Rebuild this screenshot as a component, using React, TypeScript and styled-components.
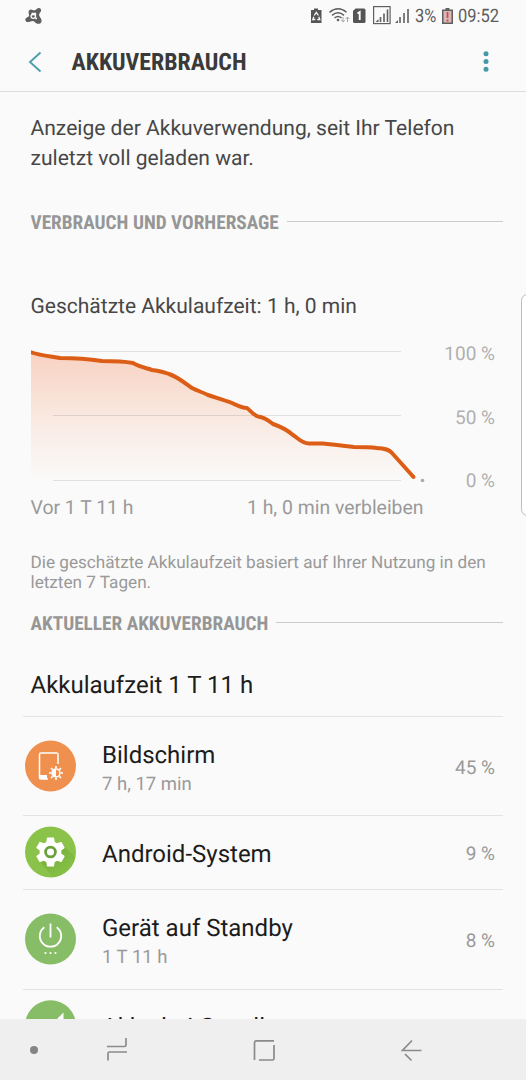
import React from 'react';
import styled, { createGlobalStyle } from 'styled-components';

const Global = createGlobalStyle`
  * { box-sizing: border-box; }
  body { margin: 0; background: #fafafa; font-family: Roboto, "Liberation Sans", sans-serif; overflow: hidden; text-rendering: geometricPrecision; }
  svg { display: block; flex: none; }
`;
const Screen = styled.div`
  width: 526px; height: 1080px; display: flex; flex-direction: column;
  background: #fafafa; color: #474747; overflow: hidden; position: relative; white-space: nowrap;
`;
const StatusBar = styled.div`
  height: 32px; flex: none; display: flex; align-items: center; padding: 0 27px 0 25px; color: #5c5c5c;
`;
const StatusIcons = styled.div`
  margin-left: auto; display: flex; align-items: center;
`;
const StatusText = styled.span<{ $w: number }>`
  width: ${p => p.$w}px; font-size: 18.5px; line-height: 32px; display: flex;
  span { transform-origin: 0 50%; transform: scaleX(0.89); }
`;
const Header = styled.header`
  height: 60px; flex: none; display: flex; align-items: center; padding: 0 37px 0 28px;
  border-bottom: 1px solid #dedede;
`;
const Title = styled.h1`
  margin: 0 auto 0 29.5px; padding-top: 1px; font-size: 23.8px; line-height: 30px; font-weight: 700; color: #3a3a3a;
  font-family: "Roboto Condensed", Roboto, sans-serif; font-stretch: 75%;
`;
const Content = styled.main`
  flex: 1; min-height: 0; overflow: hidden; padding: 0 23px 0 30.5px;
`;
const Intro = styled.p`
  margin: 22px 0 0; font-size: 21.05px; line-height: 30px;
`;
const Section = styled.h2<{ $top: number }>`
  margin: ${p => p.$top}px 0 0; display: flex; align-items: center; gap: 8px; height: 24px;
  font-size: 19.3px; line-height: 24px; color: #969696; font-weight: 700;
  font-family: "Roboto Condensed", Roboto, sans-serif; font-stretch: 75%;
  &::after { content: ''; flex: 1; height: 1px; background: #cbcbcb; margin-bottom: 4px; }
`;
const Estimate = styled.p`
  margin: 59px 0 0; font-size: 21px; line-height: 26px;
`;
const ChartRow = styled.div`
  display: flex; justify-content: space-between; margin-top: 22px; padding-right: 8px; height: 151px;
`;
const Scale = styled.div`
  display: flex; flex-direction: column; justify-content: space-between; height: 151px;
  text-align: right; font-size: 19px; line-height: 24px; color: #b0b0b0;
`;
const Times = styled.div`
  display: flex; justify-content: space-between; width: 393px; margin-top: 3px;
  font-size: 19.4px; line-height: 24px; color: #999;
`;
const Note = styled.p`
  margin: 33px 0 0; font-size: 17.15px; line-height: 20px; color: #999;
`;
const Runtime = styled.p`
  margin: 34px 0 0; font-size: 24px; line-height: 30px; color: #1c1c1c; height: 46px;
`;
const List = styled.div`
  margin-left: -7.5px;
`;
const Row = styled.div<{ $h: number }>`
  height: ${p => p.$h}px; border-top: 1px solid #e3e3e3; display: flex; align-items: center; padding: 0 8px 0 2px;
  > svg { margin-bottom: 1px; }
`;
const Labels = styled.div<{ $double: boolean }>`
  margin: 0 auto 0 26px; padding-top: ${p => (p.$double ? 5 : 3)}px;
`;
const Name = styled.div`
  font-size: 24px; line-height: 30px; color: #1c1c1c;
`;
const Detail = styled.div`
  font-size: 18.5px; line-height: 28px; color: #999;
`;
const Percent = styled.div`
  font-size: 19px; line-height: 24px; color: #999; padding-top: 3px;
`;
const Nav = styled.nav`
  height: 61px; flex: none; background: #efefef; display: flex; align-items: center; padding: 1px 0 0 29px;
`;
const Space = styled.span<{ $w: number }>`
  width: ${p => p.$w}px; flex: none;
`;
const EdgeHandle = styled.div`
  position: absolute; top: 294px; right: -8px; width: 13px; height: 222px;
  border: 1px solid #bdbdbd; border-radius: 7px; background: #fff;
`;

const line = 'M30.5 352 C38 355 48 356 60 358 C78 358 89 359 102 361 C114 361 122 361 133 363 C140 367 146 368 152 370 C159 371 164 372 169 374 C178 377 186 384 192 388 C198 391 202 392 208 395 C217 398 224 400 232 403 C236 405 242 408 247 408 C251 411 252 414 258 416.500 C263 417 268 420 273 424 C282 427 286 429 293 435 C299 439 302 443.500 309 443.500 L323 443.500 C336 445 344 446 354 447 C364 447 369 447 377 448 C384 448.500 389 449 392 453 L413.500 477';

const Chart = () => (
  <svg width="395" height="151" viewBox="31 342 395 151">
    <defs>
      <linearGradient id="fill" x1="0" y1="352" x2="0" y2="480" gradientUnits="userSpaceOnUse">
        <stop offset="0" stopColor="#f8d2c2" />
        <stop offset=".5" stopColor="#f9e8e0" />
        <stop offset="1" stopColor="#fafafa" />
      </linearGradient>
    </defs>
    <path d={line + ' V480 H30.5Z'} fill="url(#fill)" />
    <path d="M53 351.500H401M53 415.500H401M53 480.500H401" stroke="#000" strokeOpacity=".1" />
    <path d={line} fill="none" stroke="#dc5d15" strokeWidth="4" strokeLinejoin="round" />
    <circle cx="413.500" cy="477" r="2" fill="#dc5d15" />
    <circle cx="422.500" cy="480.500" r="1.800" fill="#aaa" />
  </svg>
);

const ScreenIcon = () => (
  <svg width="51" height="52" viewBox="0 0 51 52">
    <circle cx="25.500" cy="26" r="25.500" fill="#ef904e" />
    <g fill="none" stroke="#fff" strokeWidth="1.500">
      <path d="M33 24V14.500a1.500 1.500 0 0 0-1.500-1.500H16a1.500 1.500 0 0 0-1.500 1.500v23A1.500 1.500 0 0 0 16 39h7" />
      <path d="M14.500 37H22" strokeWidth="4" />
      <circle cx="31" cy="33" r="4" />
      <path d="M31 26v2.200M31 37.800V40M24 33h2.200M35.800 33H38M26 28l1.600 1.600M34.400 36.400 36 38M36 28l-1.600 1.600M27.600 36.400 26 38" strokeWidth="1.700" />
    </g>
    <path d="M31 29a4 4 0 0 0 0 8z" fill="#fff" />
  </svg>
);

const GearIcon = () => (
  <svg width="51" height="52" viewBox="0 0 51 52">
    <defs>
      <clipPath id="disc"><circle cx="25.500" cy="26" r="25.500" /></clipPath>
      <linearGradient id="shade" x1="22" y1="30" x2="36" y2="50" gradientUnits="userSpaceOnUse">
        <stop offset="0" stopColor="#6aa535" /><stop offset="1" stopColor="#83bf43" />
      </linearGradient>
    </defs>
    <circle cx="25.500" cy="26" r="25.500" fill="#8bc34a" />
    <path clipPath="url(#disc)" d="M38 19 52 33v19H28L14 34z" fill="url(#shade)" opacity=".6" />
    <g transform="translate(8.100 8.600) scale(1.450)">
      <path fill="#fff" d="M19.430 12.980c.040-.320.070-.640.070-.980s-.030-.660-.070-.980l2.110-1.650c.190-.150.240-.420.120-.640l-2-3.460c-.120-.220-.390-.300-.610-.220l-2.490 1c-.520-.400-1.080-.730-1.690-.980l-.380-2.650C14.460 2.180 14.250 2 14 2h-4c-.250 0-.460.180-.490.420l-.380 2.650c-.610.250-1.170.590-1.690.980l-2.490-1c-.230-.090-.490 0-.610.220l-2 3.460c-.130.220-.070.490.120.640l2.110 1.650c-.040.320-.070.650-.070.980s.030.660.070.980l-2.110 1.650c-.190.150-.240.420-.120.640l2 3.460c.120.220.390.300.610.220l2.490-1c.520.400 1.080.730 1.690.980l.380 2.650c.030.240.240.420.490.420h4c.250 0 .460-.180.490-.420l.380-2.650c.610-.250 1.170-.590 1.690-.980l2.490 1c.230.090.490 0 .610-.220l2-3.460c.120-.220.070-.490-.120-.640l-2.110-1.650z" />
      <circle cx="12" cy="12" r="3.400" fill="#fff" stroke="#69a23a" strokeWidth="1.900" />
    </g>
  </svg>
);

const PowerIcon = () => (
  <svg width="51" height="52" viewBox="0 0 51 52">
    <circle cx="25.500" cy="26" r="25.500" fill="#86bd66" />
    <path d="M25.500 10.500v14M19.300 14.200a10.700 10.700 0 1 0 12.400 0" fill="none" stroke="#fff" strokeWidth="1.800" />
    <g fill="#fff"><circle cx="20.500" cy="40" r="1.100" /><circle cx="25.500" cy="40" r="1.100" /><circle cx="30.500" cy="40" r="1.100" /></g>
  </svg>
);

const SignalIcon = () => (
  <svg width="51" height="52" viewBox="0 0 51 52">
    <circle cx="25.500" cy="26.800" r="25.500" fill="#86bd66" />
    <path d="M38.500 13.500v25h-25z" fill="#fff" />
  </svg>
);

const AvastIcon = () => (
  <svg width="17" height="17" viewBox="0 0 17 17">
    <path d="M6 1.500c1.500 0 2.400 1.200 3.800.8C11.400 1.800 12 0 14 0c1.800 0 2.700 2 1.700 3.700-.9 1.400-1.900 2.300-1.500 3.900.5 2 2.500 3.100 2.400 5.300-.1 2.500-3 3.600-5 2.500-1.600-1-2.200-2.600-4-2.500-1.800 0-3 1.300-5 1.200-2-.1-2.900-2.300-1.800-3.800.8-1.100 2.500-1.200 3.100-2.400.6-1.100-.4-2.200-.3-3.700C3.700 2.500 4.600 1.500 6 1.500z" fill="#5e5e5e" />
    <path d="M6.500 5.500h4v5M10.500 8c0-1-.8-1.500-2-1.500S6 7 6 8.300s1 2 2.500 2 2-1 2-2.300M10.500 10.500h1.500" fill="none" stroke="#fafafa" strokeWidth="1.300" />
  </svg>
);

const StatusDrawing = () => (
  <svg width="100" height="24" viewBox="310 4 100 24">
    <path d="M314 8.500h4V10h3.500v13h-10.500V10h3z" fill="#555" />
    <path d="M314.200 15.500l2.100-3 2.100 3M313.800 16.800l-1 2.700h2.500M318.800 16.800l1 2.700h-2.500" fill="none" stroke="#fafafa" strokeWidth="1.300" />
    <g fill="none" stroke="#5f5f5f" strokeWidth="1.500">
      <path d="M329.500 12.300q8.700-7 17 0M332 15.300q6-5 12 0M334.500 18q3.500-3 7 0" />
    </g>
    <circle cx="338" cy="20" r="1.300" fill="#5f5f5f" />
    <path d="M343 17v5M341.200 20l1.800 2 1.800-2M347.500 22v-5M345.700 19l1.800-2 1.800 2" fill="none" stroke="#aaa" strokeWidth="1" />
    <path d="M355.500 8.500H364a1.500 1.500 0 0 1 1.500 1.500v11.500a1.500 1.500 0 0 1-1.500 1.500h-9.500a1.500 1.500 0 0 1-1.500-1.500V11z" fill="#555" />
    <path d="M357.500 13.500l2.200-1.500v8" fill="none" stroke="#fafafa" strokeWidth="1.900" />
    <rect x="373.600" y="6.600" width="16.500" height="17" fill="none" stroke="#606060" strokeWidth="1.200" />
    <path d="M380.500 22v-5M384 22v-8.500M387.500 22V9.500" stroke="#606060" strokeWidth="1.600" /><path d="M378.500 19v3h-3z" fill="#606060" />
    <path d="M400 23v-6M404 23V13M408 23V9" stroke="#606060" strokeWidth="1.600" /><path d="M398 20v3H395z" fill="#606060" />
  </svg>
);

const BatteryIcon = () => (
  <svg width="11" height="16" viewBox="0 0 11 16">
    <path d="M3.500 0h4v1.500H11V16H0V1.500h3.500z" fill="#5f5f5f" /><path d="M1.500 3h8v11.500h-8z" fill="#d7b9b9" />
    <path d="M5.500 4v6M5.500 11.500v2" stroke="#dc4646" strokeWidth="1.800" />
  </svg>
);

const rows = [
  { name: 'Bildschirm', detail: '7 h, 17 min', percent: '45 %', height: 99, icon: <ScreenIcon /> },
  { name: 'Android-System', detail: '', percent: '9 %', height: 74, icon: <GearIcon /> },
  { name: 'Gerät auf Standby', detail: '1 T 11 h', percent: '8 %', height: 100, icon: <PowerIcon /> },
  { name: 'Akku bei Gesell', detail: '', percent: '', height: 72, icon: <SignalIcon /> },
];

export default function App() {
  return (
    <Screen>
      <Global />
      <StatusBar>
        <AvastIcon />
        <StatusIcons>
          <StatusDrawing />
          <Space $w={5} />
          <StatusText $w={27}><span>3%</span></StatusText>
          <BatteryIcon />
          <Space $w={5} />
          <StatusText $w={41}><span>09:52</span></StatusText>
        </StatusIcons>
      </StatusBar>
      <Header>
        <svg width="14" height="22" viewBox="0 0 14 22"><path d="M12.500 1.500 2 11l10.500 9.500" fill="none" stroke="#4b9eac" strokeWidth="1.900" /></svg>
        <Title>AKKUVERBRAUCH</Title>
        <svg width="6" height="22" viewBox="0 0 6 22" fill="#4299a7"><circle cx="3" cy="2.700" r="2.500" /><circle cx="3" cy="10.400" r="2.500" /><circle cx="3" cy="18.200" r="2.500" /></svg>
      </Header>
      <Content>
        <Intro>Anzeige der Akkuverwendung, seit Ihr Telefon<br />zuletzt voll geladen war.</Intro>
        <Section $top={37}>VERBRAUCH UND VORHERSAGE</Section>
        <Estimate>Geschätzte Akkulaufzeit: 1 h, 0 min</Estimate>
        <ChartRow>
          <Chart />
          <Scale><span>100 %</span><span>50 %</span><span>0 %</span></Scale>
        </ChartRow>
        <Times><span>Vor 1 T 11 h</span><span>1 h, 0 min verbleiben</span></Times>
        <Note>Die geschätzte Akkulaufzeit basiert auf Ihrer Nutzung in den<br />letzten 7 Tagen.</Note>
        <Section $top={19}>AKTUELLER AKKUVERBRAUCH</Section>
        <Runtime>Akkulaufzeit 1 T 11 h</Runtime>
        <List>
          {rows.map(r => (
            <Row key={r.name} $h={r.height}>
              {r.icon}
              <Labels $double={r.detail !== ''}>
                <Name>{r.name}</Name>
                {r.detail && <Detail>{r.detail}</Detail>}
              </Labels>
              <Percent>{r.percent}</Percent>
            </Row>
          ))}
        </List>
      </Content>
      <Nav>
        <svg width="10" height="10"><circle cx="5" cy="5" r="4" fill="#858585" /></svg>
        <Space $w={67} />
        <svg width="22" height="24" viewBox="106 1039 22 24" fill="none" stroke="#8b8b8b" strokeWidth="1.700"><path d="M107 1047.500h17.500a1.500 1.500 0 0 0 1.500-1.500v-7M127 1053h-17.500a1.500 1.500 0 0 0-1.500 1.500v7" /></svg>
        <Space $w={124} />
        <svg width="24" height="24" viewBox="252 1038 24 24" fill="none" stroke="#8b8b8b" strokeWidth="1.700"><path d="M274 1040.800h-17.500a2 2 0 0 0-2 2V1060M259 1060h13.500a1.500 1.500 0 0 0 1.500-1.500V1045" /></svg>
        <Space $w={124} />
        <svg width="24" height="24" viewBox="400 1038 24 24" fill="none" stroke="#8b8b8b" strokeWidth="1.700"><path d="M421.500 1050.500H402.500L412 1040.500M405 1054l6.500 6.500" /></svg>
      </Nav>
      <EdgeHandle />
    </Screen>
  );
}
